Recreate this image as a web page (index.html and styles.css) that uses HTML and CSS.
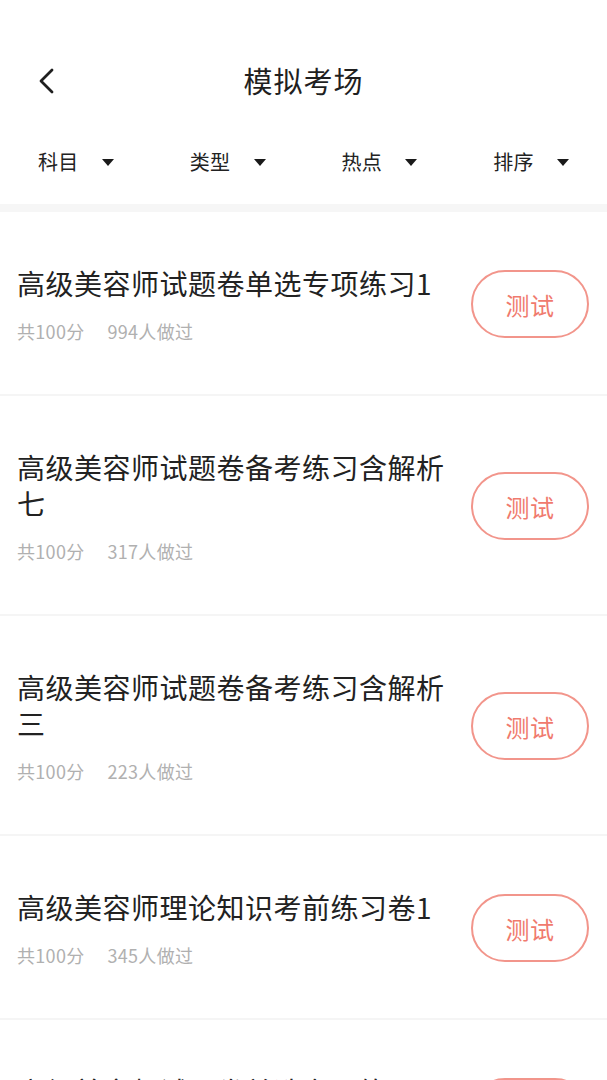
FILE: index.html
```html
<!DOCTYPE html>
<html lang="zh-CN">
<head>
<meta charset="utf-8">
<title>模拟考场</title>
<link rel="stylesheet" href="styles.css">
</head>
<body>
<div class="page">
  <header class="navbar">
    <span class="back">
      <svg width="16" height="26" viewBox="0 0 16 26"><polyline points="13,2 2,13 13,24" fill="none" stroke="#1f1f1f" stroke-width="2.8" stroke-linecap="round" stroke-linejoin="round"/></svg>
    </span>
    <h1 class="title">模拟考场</h1>
  </header>
  <nav class="filters">
    <div class="filter"><span class="filter-label">科目</span><span class="caret"></span></div>
    <div class="filter"><span class="filter-label">类型</span><span class="caret"></span></div>
    <div class="filter"><span class="filter-label">热点</span><span class="caret"></span></div>
    <div class="filter"><span class="filter-label">排序</span><span class="caret"></span></div>
  </nav>
  <div class="band"></div>
  <ul class="list">
    <li class="card">
      <div class="info">
        <div class="card-title">高级美容师试题卷单选专项练习1</div>
        <div class="meta"><span>共100分</span><span>994人做过</span></div>
      </div>
      <button class="btn">测试</button>
    </li>
    <li class="card">
      <div class="info">
        <div class="card-title">高级美容师试题卷备考练习含解析七</div>
        <div class="meta"><span>共100分</span><span>317人做过</span></div>
      </div>
      <button class="btn">测试</button>
    </li>
    <li class="card">
      <div class="info">
        <div class="card-title">高级美容师试题卷备考练习含解析三</div>
        <div class="meta"><span>共100分</span><span>223人做过</span></div>
      </div>
      <button class="btn">测试</button>
    </li>
    <li class="card">
      <div class="info">
        <div class="card-title">高级美容师理论知识考前练习卷1</div>
        <div class="meta"><span>共100分</span><span>345人做过</span></div>
      </div>
      <button class="btn">测试</button>
    </li>
    <li class="card">
      <div class="info">
        <div class="card-title">高级美容师试题卷单选专项练习2</div>
        <div class="meta"><span>共100分</span><span>412人做过</span></div>
      </div>
      <button class="btn">测试</button>
    </li>
  </ul>
</div>
</body>
</html>
```
FILE: styles.css
```css
* { box-sizing: border-box; }
html, body { margin: 0; padding: 0; background: #ffffff; }
body {
  font-family: "Noto Sans CJK SC", "Noto Sans", "Liberation Sans", sans-serif;
  color: #222222;
}
.page { width: 607px; overflow: hidden; }

.navbar {
  margin-top: 40px;
  height: 80px;
  display: flex;
  align-items: center;
  justify-content: center;
  position: relative;
}
.back {
  position: absolute;
  left: 39px;
  top: 28px;
  width: 16px;
  height: 26px;
  display: flex;
}
.title {
  margin: 0;
  font-size: 29px;
  font-weight: 400;
  letter-spacing: 1px;
  color: #1f1f1f;
  line-height: 40px;
}

.filters {
  height: 84px;
  display: grid;
  grid-template-columns: repeat(4, 1fr);
  align-items: center;
}
.filter {
  display: flex;
  align-items: center;
  justify-content: center;
  gap: 23px;
}
.filter-label {
  font-size: 20px;
  line-height: 28px;
  color: #222222;
  letter-spacing: 0.5px;
}
.caret {
  width: 0;
  height: 0;
  border-left: 6.5px solid transparent;
  border-right: 6.5px solid transparent;
  border-top: 7px solid #1a1a1a;
}

.band { height: 8px; background: #f6f6f6; }

.list { list-style: none; margin: 0; padding: 0; }
.card {
  display: flex;
  align-items: center;
  gap: 20px;
  padding: 53px 18px 51px 17px;
  border-bottom: 2px solid #f5f5f5;
}
.info { flex: 1; min-width: 0; }
.card-title {
  font-size: 28px;
  line-height: 36px;
  letter-spacing: 0.5px;
  color: #222222;
}
.meta {
  margin-top: 18px;
  display: flex;
  gap: 23px;
  font-size: 18px;
  line-height: 24px;
  color: #b0b0b0;
  letter-spacing: 0.3px;
}
.btn {
  flex: none;
  width: 118px;
  height: 68px;
  border: 2px solid #f2958b;
  border-radius: 34px;
  background: #ffffff;
  color: #f07a6e;
  font-family: inherit;
  font-size: 24px;
  letter-spacing: 0.5px;
  padding: 0;
}
```
